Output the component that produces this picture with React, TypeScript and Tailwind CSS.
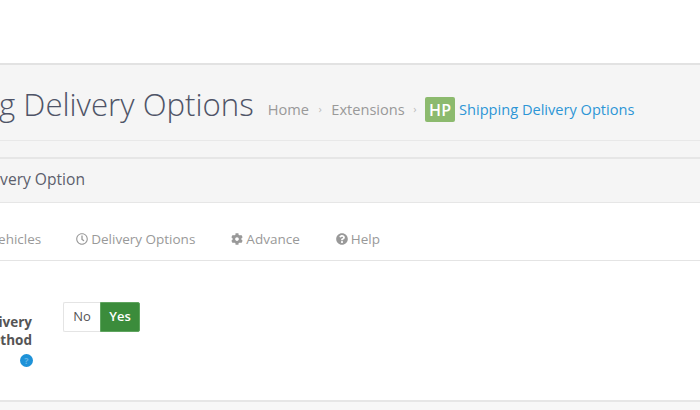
import { FaCog, FaQuestionCircle, FaRegClock } from "react-icons/fa";

const font = { fontFamily: '"Open Sans", sans-serif' };

export default function App() {
  return (
    <div className="w-[700px] h-[410px] overflow-hidden bg-white flex flex-col font-['Open_Sans',sans-serif]" style={font}>
      <div className="h-[63px] flex-none bg-white" />
      <div className="flex-none h-[77px] bg-[#f5f5f5] border-t-2 border-[#e2e2e2] flex items-center whitespace-nowrap">
        <h1 className="ml-[-106px] mt-[4px] text-[31.2px] font-light text-[#4f5467] leading-none flex-none">Shipping Delivery Options</h1>
        <div className="flex items-center ml-[14px] text-[14.6px] text-[#999999] mt-[14px]">
          <span>Home</span>
          <span className="mx-[9.5px] text-[11px] text-[#bbbbbb]">›</span>
          <span>Extensions</span>
          <span className="mx-[8.5px] text-[11px] text-[#bbbbbb]">›</span>
          <span className="w-[30px] h-[25px] bg-[#8cba6e] rounded-[2px] text-white font-semibold text-[16px] flex items-center justify-center mr-[4px]">HP</span>
          <span className="text-[#2d96d6]">Shipping Delivery Options</span>
        </div>
      </div>
      <div className="flex-none h-[17px] bg-[#f5f5f5] border-t border-[#e8e8e8]" />
      <div className="flex-none h-[46px] bg-[#f5f5f5] border-t-2 border-b border-[#e6e6e6] flex items-center whitespace-nowrap">
        <span className="ml-[-95px] mt-[-1px] text-[15.6px] font-medium text-[#5c5e6c]">Shipping Delivery Option</span>
      </div>
      <div className="flex-none h-[58px] pt-[15px] border-b border-[#e4e4e4] flex items-center whitespace-nowrap text-[13.5px] text-[#999999]">
        <span className="ml-[-10px]">Vehicles</span>
        <span className="ml-[35px] flex items-center gap-[3px]"><FaRegClock className="text-[12px]" />Delivery Options</span>
        <span className="ml-[36px] flex items-center gap-[3px]"><FaCog className="text-[12px]" />Advance</span>
        <span className="ml-[36px] flex items-center gap-[3px]"><FaQuestionCircle className="text-[12px]" />Help</span>
      </div>
      <div className="flex-none h-[141px] flex items-start border-b-2 border-[#e6e6e6]">
        <div className="w-[32px] flex-none mt-[52px] flex flex-col items-end whitespace-nowrap text-[13.5px] leading-[18px] font-bold text-[#555555]">
          <span>Delivery</span>
          <span>Method</span>
          <span className="mt-[5px] mr-[-1px] w-[13px] h-[13px] rounded-full bg-[#1e92d8] text-[#66b5e6] text-[9px] font-bold leading-none flex items-center justify-center">?</span>
        </div>
        <div className="ml-[31px] mt-[41px] flex h-[30px] text-[13px] font-semibold">
          <span className="w-[37px] bg-white border border-[#e4e4e4] border-r-0 rounded-l-[2px] flex items-center justify-center text-[#555555] font-normal">No</span>
          <span className="w-[40px] bg-[#3b8c3b] border border-[#5fa55f] rounded-r-[2px] flex items-center justify-center text-white">Yes</span>
        </div>
      </div>
      <div className="flex-1 bg-[#f7f7f7]" />
    </div>
  );
}
